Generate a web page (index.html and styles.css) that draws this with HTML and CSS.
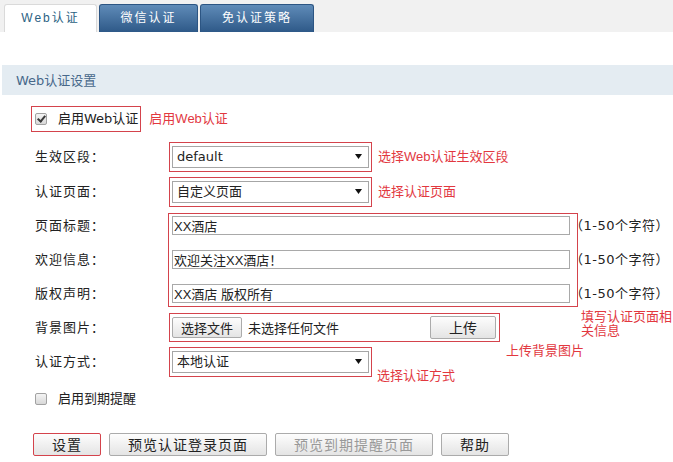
FILE: index.html
```html
<!DOCTYPE html>
<html>
<head>
    <title>Web认证</title>
    <link rel="stylesheet" href="styles.css">
</head>
<body>
<div class="tabs">
    <a class="tab tab-web active">Web认证</a>
    <a class="tab tab-wx">微信认证</a>
    <a class="tab tab-free">免认证策略</a>
</div>

<div class="section-title">Web认证设置</div>

<div class="form">
    <div class="row row-enable">
        <label class="mark check-box"><input type="checkbox" class="chk" checked><span>启用Web认证</span></label>
        <span class="note">启用Web认证</span>
    </div>

    <div class="row row-zone">
        <span class="label">生效区段：</span>
        <div class="mark sel-box">
            <div class="select">
                <select><option>default</option></select>
                <svg class="arrow" width="7" height="5" viewBox="0 0 7 5"><path d="M0 0H7L3.5 5Z" fill="#111"/></svg>
            </div>
        </div>
        <span class="note">选择Web认证生效区段</span>
    </div>

    <div class="row row-page">
        <span class="label">认证页面：</span>
        <div class="mark sel-box">
            <div class="select">
                <select><option>自定义页面</option></select>
                <svg class="arrow" width="7" height="5" viewBox="0 0 7 5"><path d="M0 0H7L3.5 5Z" fill="#111"/></svg>
            </div>
        </div>
        <span class="note">选择认证页面</span>
    </div>

    <div class="group">
        <div class="group-labels">
            <span>页面标题：</span>
            <span>欢迎信息：</span>
            <span>版权声明：</span>
        </div>
        <div class="mark fields">
            <div class="field"><input type="text" value="XX酒店"><span class="hint">（1-50个字符）</span></div>
            <div class="field"><input type="text" value="欢迎关注XX酒店！"><span class="hint">（1-50个字符）</span></div>
            <div class="field"><input type="text" value="XX酒店 版权所有"><span class="hint">（1-50个字符）</span></div>
        </div>
        <span class="note note-fill">填写认证页面相关信息</span>
    </div>

    <div class="row row-bg">
        <span class="label">背景图片：</span>
        <div class="mark file-box">
            <button class="btn btn-file">选择文件</button>
            <span class="file-name">未选择任何文件</span>
            <button class="btn btn-upload">上传</button>
        </div>
        <span class="note note-low">上传背景图片</span>
    </div>

    <div class="row row-auth">
        <span class="label">认证方式：</span>
        <div class="mark sel-box">
            <div class="select">
                <select><option>本地认证</option></select>
                <svg class="arrow" width="7" height="5" viewBox="0 0 7 5"><path d="M0 0H7L3.5 5Z" fill="#111"/></svg>
            </div>
        </div>
        <span class="note note-auth">选择认证方式</span>
    </div>

    <div class="row row-remind">
        <label class="plain-check"><input type="checkbox" class="chk"><span>启用到期提醒</span></label>
    </div>

    <div class="actions">
        <button class="btn btn-main mark-btn">设置</button>
        <button class="btn btn-main">预览认证登录页面</button>
        <button class="btn btn-main" disabled>预览到期提醒页面</button>
        <button class="btn btn-main">帮助</button>
    </div>
</div>
</body>
</html>
```

FILE: styles.css
```css
body {
    margin: 0;
    font-family: "DejaVu Sans", "Noto Sans CJK SC", sans-serif;
    font-size: 13px;
    color: #222;
    background: #fff;
}

.tabs {
    height: 32px;
    box-sizing: border-box;
    padding: 4px 0 0 4px;
    background: #f1f1f1;
    display: flex;
}

.tab {
    height: 28px;
    box-sizing: border-box;
    line-height: 27px;
    text-align: center;
    font-size: 12px;
    letter-spacing: 2px;
    color: #fff;
    border: 1px solid #2c5583;
    border-bottom: none;
    border-radius: 3px 3px 0 0;
    background: linear-gradient(#5f8bb8, #2e5988);
    margin-right: 2px;
}

.tab-web { width: 93px; }
.tab-wx { width: 99px; }
.tab-free { width: 114px; }

.tab.active {
    background: #fff;
    color: #2b6283;
    border: 1px solid #dadada;
    border-bottom: none;
    font-family: "Liberation Sans", "Noto Sans CJK SC", sans-serif;
}

.section-title {
    margin: 33px 0 0 2px;
    height: 30px;
    line-height: 31px;
    padding-left: 14px;
    background: #e4ecf2;
    color: #47688a;
}

.form {
    padding: 11px 0 0 35px;
}

.row {
    display: flex;
    align-items: center;
}

.mark {
    border: 1px solid #d4434c;
    box-sizing: border-box;
}

.note {
    color: #e2383f;
    line-height: 16px;
    font-family: "Liberation Sans", "Noto Sans CJK SC", sans-serif;
    white-space: nowrap;
}

.label {
    width: 134px;
    flex-shrink: 0;
    letter-spacing: 1px;
    line-height: 16px;
}

/* enable checkbox */
.row-enable {
    margin-left: -4px;
}

.check-box {
    height: 26px;
    display: flex;
    align-items: center;
    padding: 0 2px 0 3px;
}

.check-box span,
.plain-check span {
    margin-left: 11px;
    line-height: 16px;
}

.row-enable .note {
    margin-left: 8px;
}

.chk {
    appearance: none;
    -webkit-appearance: none;
    width: 12px;
    height: 12px;
    margin: 0;
    border: 1px solid #a2a2a2;
    border-radius: 2px;
    background: linear-gradient(#f4f4f4, #d8d8d8);
    position: relative;
    flex-shrink: 0;
}

.chk:checked::after {
    content: "";
    position: absolute;
    left: 3px;
    top: 0;
    width: 3px;
    height: 6px;
    border: solid #3a3a3a;
    border-width: 0 2px 2px 0;
    transform: rotate(40deg);
}

/* selects */
.sel-box {
    height: 30px;
    padding: 3px 2px;
}

.select {
    position: relative;
    width: 197px;
    height: 22px;
}

.select select {
    appearance: none;
    -webkit-appearance: none;
    width: 100%;
    height: 22px;
    margin: 0;
    padding: 0 4px;
    border: 1px solid #a6a6a6;
    border-radius: 0;
    background: #fff;
    color: #222;
    font: inherit;
    line-height: 20px;
}

.select .arrow {
    position: absolute;
    right: 7px;
    top: 8px;
}

.row-zone {
    margin-top: 10px;
}

.row-page {
    margin-top: 5px;
}

.row-zone .note,
.row-page .note {
    margin-left: 6px;
}

/* text fields */
.group {
    position: relative;
    display: flex;
    margin-top: 6px;
}

.group-labels {
    width: 133px;
    flex-shrink: 0;
    padding-top: 3px;
    display: flex;
    flex-direction: column;
    gap: 15px;
    letter-spacing: 1px;
}

.group-labels span {
    line-height: 19px;
}

.fields {
    width: 410px;
    padding: 2px 7px 3px 3px;
    display: flex;
    flex-direction: column;
    gap: 15px;
}

.field {
    display: flex;
    align-items: center;
    white-space: nowrap;
    height: 19px;
}

.field input {
    width: 398px;
    height: 19px;
    flex-shrink: 0;
    box-sizing: border-box;
    margin: 0;
    padding: 0 1px;
    border: 1px solid #a9a9a9;
    font-family: "Liberation Sans", "Noto Sans CJK SC", sans-serif;
    font-size: 13px;
    color: #222;
}

.hint {
    line-height: 19px;
    letter-spacing: .5px;
}

.note-fill {
    position: absolute;
    left: 546px;
    top: 97px;
    width: 92px;
    white-space: normal;
    line-height: 14px;
}

/* file upload */
.row-bg {
    margin-top: 6px;
}

.file-box {
    width: 331px;
    height: 29px;
    padding: 0 3px 0 2px;
    display: flex;
    align-items: center;
}

.file-name {
    margin-left: 6px;
}

.note-low {
    align-self: flex-end;
    margin: 0 0 -17px 6px;
}

/* buttons */
.btn {
    font-family: "Noto Sans CJK SC", sans-serif;
    color: #222;
    background: linear-gradient(#fdfdfd, #e4e4e4);
    border: 1px solid #ababab;
    border-radius: 2px;
    margin: 0;
    cursor: pointer;
}

.btn-file {
    width: 70px;
    height: 21px;
    padding: 0;
    font-size: 13px;
    line-height: 19px;
}

.btn-upload {
    margin-left: auto;
    width: 66px;
    height: 23px;
    padding: 0;
    font-size: 14px;
    line-height: 21px;
}

.row-auth {
    margin-top: 5px;
}

.note-auth {
    align-self: flex-end;
    margin: 0 0 -7px 5px;
}

.row-remind {
    margin-top: 14px;
}

.plain-check {
    display: flex;
    align-items: center;
}

.actions {
    margin: 26px 0 0 -2px;
    display: flex;
    gap: 8px;
}

.btn-main {
    height: 23px;
    padding: 0 18px;
    font-size: 14px;
    letter-spacing: 1px;
    line-height: 21px;
}

.btn-main:disabled {
    color: #999;
}

.mark-btn {
    border-color: #d4434c;
}
```
